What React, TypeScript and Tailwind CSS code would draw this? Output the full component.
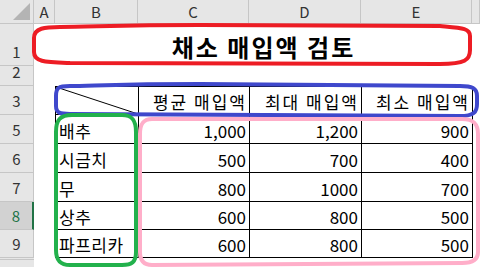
import React from "react";

const font = { fontFamily: '"Noto Sans CJK KR", "Noto Sans", sans-serif' };

const cols = ["A", "B", "C", "D", "E", ""];
const rowHeights = [
  { n: "1", h: "h-[42px]" },
  { n: "2", h: "h-[20px]" },
  { n: "3", h: "h-[29px]" },
  { n: "5", h: "h-[29px]" },
  { n: "6", h: "h-[29px]" },
  { n: "7", h: "h-[29px]" },
  { n: "8", h: "h-[28px]" },
  { n: "9", h: "h-[28px]" },
];

const data = [
  ["배추", "1,000", "1,200", "900"],
  ["시금치", "500", "700", "400"],
  ["무", "800", "1000", "700"],
  ["상추", "600", "800", "500"],
  ["파프리카", "600", "800", "500"],
];

function Corner() {
  return (
    <div className="relative h-[24px] w-[34px] border-r border-b border-[#c6c6c6] bg-[#e6e6e6]">
      <svg className="absolute right-[3px] bottom-[3px]" width="17" height="17">
        <polygon points="17,0 17,17 0,17" fill="#b4b4b4" />
      </svg>
    </div>
  );
}

export default function App() {
  return (
    <div className="relative h-[267px] w-[480px] overflow-hidden bg-white text-[17px] leading-none text-black" style={font}>
      {/* column letters */}
      <div className="flex h-[24px]">
        <Corner />
        {cols.map((c, i) => (
          <div
            key={i}
            className={`flex h-[24px] items-center justify-center border-b border-r border-[#c6c6c6] bg-[#e6e6e6] text-[15px] text-[#333] ${
              ["w-[21px]", "w-[83px]", "w-[111px]", "w-[112px]", "w-[111px]", "flex-1"][i]
            }`}
          >
            {c}
          </div>
        ))}
      </div>

      <div className="flex">
        {/* row numbers */}
        <div className="flex w-[34px] flex-col">
          {rowHeights.map((r) => (
            <div
              key={r.n}
              className={`flex items-end justify-center border-b border-[#c6c6c6] pb-[6px] text-[15px] ${r.h} ${
                r.n === "8"
                  ? "border-r-2 border-r-[#217346] bg-[#d2d2d2] text-[#217346]"
                  : "border-r border-r-[#c6c6c6] bg-[#e6e6e6] text-[#333]"
              }`}
            >
              {r.n}
            </div>
          ))}
          <div className="h-[2px] border-b border-[#c6c6c6] bg-[#e6e6e6]" />
          <div className="h-[20px] bg-[#e6e6e6]" />
        </div>

        {/* sheet cells */}
        <div className="flex flex-1 flex-col">
          <div className="flex h-[42px]">
            <div className="w-[21px]" />
            <div className="flex w-[417px] items-center justify-center pt-[4px] text-[24px] font-bold tracking-[2px]">
              채소 매입액 검토
            </div>
          </div>
          <div className="h-[20px]" />

          <div className="flex">
            <div className="w-[21px]" />
            <div className="flex flex-col border-l border-t border-black">
              {/* header row */}
              <div className="flex h-[28px]">
                <div className="relative w-[83px] border-b border-r border-black">
                  <svg className="absolute inset-0" width="82" height="27">
                    <line x1="0" y1="0" x2="82" y2="27" stroke="black" strokeWidth="1" />
                  </svg>
                </div>
                {["평균 매입액", "최대 매입액", "최소 매입액"].map((t, i) => (
                  <div
                    key={t}
                    className={`flex items-center justify-end border-b border-r border-black pr-[2px] pt-[2px] tracking-[2px] ${
                      ["w-[111px]", "w-[112px]", "w-[111px]"][i]
                    }`}
                  >
                    {t}
                  </div>
                ))}
              </div>
              {data.map((row, ri) => (
                <div key={ri} className={`flex ${ri < 3 ? "h-[29px]" : "h-[28px]"}`}>
                  <div className="flex w-[83px] items-center border-b border-r border-black pl-[3px] pt-[2px] tracking-[0.5px]">
                    {row[0]}
                  </div>
                  {row.slice(1).map((v, ci) => (
                    <div
                      key={ci}
                      className={`flex items-center justify-end border-b border-r border-black pr-[3px] pt-[2px] ${
                        ["w-[111px]", "w-[112px]", "w-[111px]"][ci]
                      }`}
                    >
                      {v}
                    </div>
                  ))}
                </div>
              ))}
            </div>
          </div>
        </div>
      </div>

      {/* hand-drawn highlight marks over the sheet */}
      <svg className="pointer-events-none absolute left-0 top-0" width="480" height="267" fill="none" strokeWidth="4">
        <path
          d="M60 27 C 45 27, 34 28, 34 38 L 34 52 C 34 62, 45 62, 70 63 L 440 64 C 465 64, 470 60, 470 50 L 470 36 C 470 28, 462 28, 440 26 L 200 25 C 120 25, 90 27, 60 27 Z"
          stroke="#ed1c24"
        />
        <path
          d="M70 86 C 58 86, 56 88, 56 96 L 56 106 C 56 113, 60 114, 70 114 L 460 116 C 474 116, 477 112, 477 104 L 477 96 C 477 88, 472 86, 460 86 L 200 84 C 120 84, 90 86, 70 86 Z"
          stroke="#3f48cc"
        />
        <path
          d="M72 115 L 122 115 C 132 115, 136 120, 136 132 L 136 252 C 136 262, 132 265, 122 265 L 70 265 C 60 265, 56 260, 56 250 L 56 132 C 56 120, 60 115, 72 115 Z"
          stroke="#22b14c"
        />
        <path
          d="M152 119 L 462 119 C 474 119, 478 124, 478 134 L 478 252 C 478 260, 472 263, 462 263 L 152 265 C 143 265, 140 260, 140 252 L 140 134 C 140 124, 143 119, 152 119 Z"
          stroke="#ffaec9"
        />
      </svg>
    </div>
  );
}
